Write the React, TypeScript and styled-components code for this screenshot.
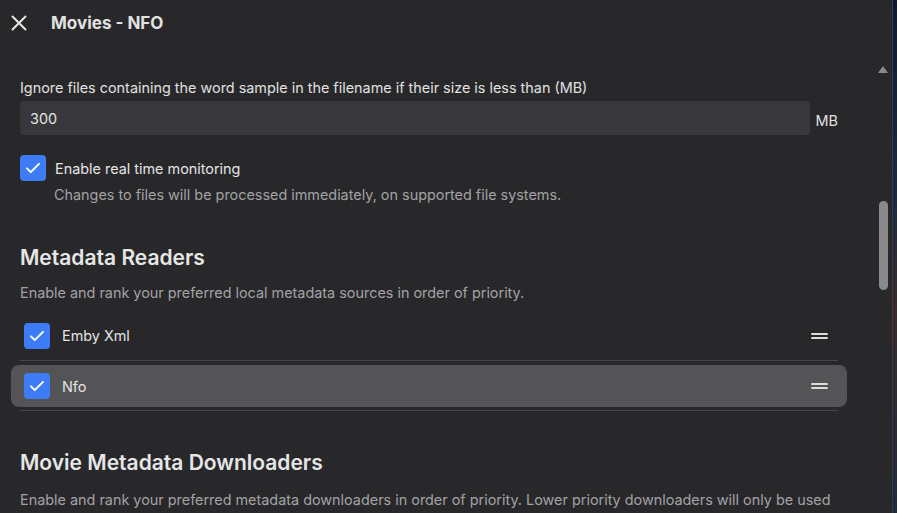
import React from 'react';
import styled, { createGlobalStyle } from 'styled-components';

const GlobalStyle = createGlobalStyle`
  html, body {
    margin: 0;
    padding: 0;
    height: 100%;
    overflow: hidden;
  }
  body {
    background: linear-gradient(180deg, #0e1a33 0%, #1b2a44 40%, #3a2a2a 60%, #1c2a40 100%);
    font-family: Inter, "Noto Sans", sans-serif;
    -webkit-font-smoothing: antialiased;
  }
`;

const Dialog = styled.div`
  width: 892px;
  height: 513px;
  background: #28282b;
  border-right: 1px solid #3c3c40;
  color: #e4e4e4;
  display: flex;
  flex-direction: column;
  overflow: hidden;
`;

const Header = styled.div`
  height: 46px;
  display: flex;
  align-items: center;
  padding-left: 5px;
  gap: 18px;
  flex-shrink: 0;
`;

const CloseButton = styled.button`
  width: 28px;
  height: 28px;
  padding: 0;
  border: 0;
  background: transparent;
  color: #e6e6e6;
  display: flex;
  align-items: center;
  justify-content: center;
  cursor: pointer;
`;

const Title = styled.h2`
  margin: 0;
  font-size: 17px;
  font-weight: 700;
  color: #e2e2e2;
`;

const ScrollArea = styled.div`
  flex: 1;
  display: flex;
  min-height: 0;
`;

const Content = styled.div`
  flex: 1;
  padding: 32px 37px 0 20px;
  overflow: hidden;
`;

const ScrollTrack = styled.div`
  width: 17px;
  display: flex;
  flex-direction: column;
  align-items: center;
  padding-top: 20px;
  flex-shrink: 0;
`;

const ScrollArrow = styled.div`
  width: 0;
  height: 0;
  border-left: 5px solid transparent;
  border-right: 5px solid transparent;
  border-bottom: 7px solid #8a8a8c;
  margin-left: -1px;
`;

const ScrollThumb = styled.div`
  width: 9px;
  height: 89px;
  border-radius: 5px;
  background: #8a8a8c;
  margin-top: 128px;
  margin-left: -1px;
`;

const FieldLabel = styled.div`
  font-size: 14.4px;
  line-height: 20px;
  color: #e0e0e0;
`;

const InputRow = styled.div`
  display: flex;
  align-items: center;
  gap: 6px;
  margin-top: 3px;
`;

const TextInput = styled.input`
  flex: 1;
  height: 34px;
  box-sizing: border-box;
  border: 0;
  border-radius: 4px;
  background: #38383c;
  color: #e6e6e6;
  font-family: inherit;
  font-size: 14.4px;
  padding: 0 10px;
  outline: none;
`;

const Suffix = styled.span`
  font-size: 14.4px;
  color: #e0e0e0;
  margin-top: 4px;
`;

const CheckRow = styled.label`
  display: flex;
  align-items: center;
  gap: 9px;
  margin-top: 20px;
  font-size: 14.4px;
  color: #e4e4e4;
`;

const Box = styled.span`
  width: 26px;
  height: 26px;
  border-radius: 4px;
  background: #3d7cf6;
  display: flex;
  align-items: center;
  justify-content: center;
  flex-shrink: 0;
`;

const Help = styled.div`
  margin: 4px 0 0 34px;
  font-size: 14.4px;
  line-height: 20px;
  color: #a2a2a4;
`;

const SectionTitle = styled.h3<{ $top: number }>`
  margin: ${(p) => p.$top}px 0 0;
  font-size: 21px;
  line-height: 28px;
  font-weight: 600;
  color: #e6e6e6;
`;

const SectionDesc = styled.p<{ $top: number }>`
  margin: ${(p) => p.$top}px 0 0;
  font-size: 14.4px;
  line-height: 24px;
  color: #a2a2a4;
`;

const List = styled.div`
  margin-top: 6px;
`;

const Item = styled.div`
  height: 49px;
  border-bottom: 1px solid #46464a;
  display: flex;
  align-items: center;
`;

const ItemInner = styled.div<{ $active?: boolean }>`
  flex: 1;
  display: flex;
  align-items: center;
  gap: 12px;
  height: 42px;
  box-sizing: border-box;
  border-radius: 8px;
  background: ${(p) => (p.$active ? '#545456' : 'transparent')};
  margin: ${(p) => (p.$active ? '1px -9px 0' : '0')};
  padding: ${(p) => (p.$active ? '0 19px 0 13px' : '0 10px 0 4px')};
`;

const ItemName = styled.span`
  flex: 1;
  font-size: 14.4px;
  color: #e4e4e4;
`;

const Handle = styled.span`
  display: flex;
  flex-direction: column;
  gap: 2px;
  width: 17px;
  & > i {
    display: block;
    height: 2px;
    background: #dcdcdc;
    border-radius: 1px;
  }
`;

const Check = () => (
  <Box>
    <svg width="18" height="18" viewBox="0 0 24 24" fill="none" stroke="#fff" strokeWidth="2.6" strokeLinecap="round" strokeLinejoin="round">
      <path d="M4 12.5l5 5L20 6.5" />
    </svg>
  </Box>
);

const readers = [
  { name: 'Emby Xml', active: false },
  { name: 'Nfo', active: true },
];

const App: React.FC = () => {
  const [size, setSize] = React.useState('300');

  return (
    <>
      <GlobalStyle />
      <Dialog>
        <Header>
          <CloseButton aria-label="Close">
            <svg width="28" height="28" viewBox="0 0 28 28" fill="none" stroke="currentColor" strokeWidth="2" strokeLinecap="round">
              <path d="M7.5 7.5l13 13M20.5 7.5l-13 13" />
            </svg>
          </CloseButton>
          <Title>Movies - NFO</Title>
        </Header>
        <ScrollArea>
          <Content>
            <FieldLabel>Ignore files containing the word sample in the filename if their size is less than (MB)</FieldLabel>
            <InputRow>
              <TextInput value={size} onChange={(e) => setSize(e.target.value)} />
              <Suffix>MB</Suffix>
            </InputRow>
            <CheckRow>
              <Check />
              Enable real time monitoring
            </CheckRow>
            <Help>Changes to files will be processed immediately, on supported file systems.</Help>

            <SectionTitle $top={39}>Metadata Readers</SectionTitle>
            <SectionDesc $top={9}>Enable and rank your preferred local metadata sources in order of priority.</SectionDesc>
            <List>
              {readers.map((r) => (
                <Item key={r.name}>
                  <ItemInner $active={r.active}>
                    <Check />
                    <ItemName>{r.name}</ItemName>
                    <Handle>
                      <i />
                      <i />
                    </Handle>
                  </ItemInner>
                </Item>
              ))}
            </List>

            <SectionTitle $top={38}>Movie Metadata Downloaders</SectionTitle>
            <SectionDesc $top={11}>
              Enable and rank your preferred metadata downloaders in order of priority. Lower priority downloaders will only be used to fill in missing information.
            </SectionDesc>
          </Content>
          <ScrollTrack>
            <ScrollArrow />
            <ScrollThumb />
          </ScrollTrack>
        </ScrollArea>
      </Dialog>
    </>
  );
};

export default App;
